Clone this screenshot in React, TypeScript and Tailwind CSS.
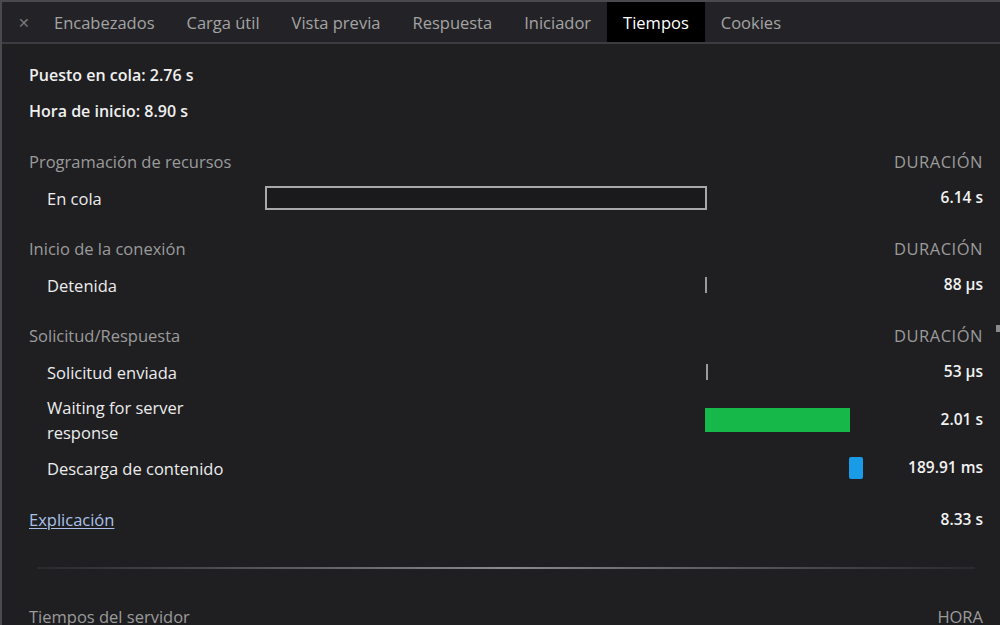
const tabs = ["Encabezados", "Carga útil", "Vista previa", "Respuesta", "Iniciador", "Tiempos", "Cookies"];

type Bar = { left: number; width: number; kind: "outline" | "tick" | "green" | "blue" };

const Row = ({ label, value, bar, tall }: { label: string; value: string; bar?: Bar; tall?: boolean }) => (
  <div className={tall ? "flex h-[60px] items-center" : "flex h-9 items-center"}>
    <div className="w-[234px] pl-[18px] pr-[8px] leading-[25px] text-[#ececec]">{label}</div>
    <div className="relative h-full w-[600px]">
      {bar && bar.kind === "outline" && (
        <div
          className="absolute top-[6px] h-[24px] border-2 border-[#a8a8a8] bg-[#1a1a1d]"
          style={{ left: bar.left, width: bar.width }}
        />
      )}
      {bar && bar.kind === "tick" && (
        <div className="absolute top-[10px] h-[16px] w-[2px] bg-[#9a9a9a]" style={{ left: bar.left }} />
      )}
      {bar && bar.kind === "green" && (
        <div
          className="absolute top-[18px] h-[24px] bg-[#17b84a]"
          style={{ left: bar.left, width: bar.width }}
        />
      )}
      {bar && bar.kind === "blue" && (
        <div
          className="absolute top-[7px] h-[22px] rounded-[2px] bg-[#1a9be8]"
          style={{ left: bar.left, width: bar.width }}
        />
      )}
    </div>
    <div className="flex-1 text-right text-[15.5px] font-semibold text-[#f2f2f2]">{value}</div>
  </div>
);

const Section = ({ title, right = "DURACIÓN" }: { title: string; right?: string }) => (
  <div className="mt-[15px] flex h-9 items-center justify-between text-[#9b9b9b]">
    <span>{title}</span>
    <span className="tracking-[0.5px]">{right}</span>
  </div>
);

export default function App() {
  return (
    <div
      className="relative h-[625px] w-[1000px] overflow-hidden border-l-2 border-[#4a4a4e] bg-[#1f1f22] text-[16.5px]"
      style={{ fontFamily: "'Open Sans', 'Noto Sans', sans-serif" }}
    >
      {/* tab strip */}
      <div className="flex h-[44px] items-stretch border-t-2 border-b-2 border-t-[#4a4a4e] border-b-[#3c3c40] bg-[#232327] text-[16.5px] text-[#a3a3a3]">
        <span className="flex w-[36px] items-center justify-end pr-[8px] text-[14px] text-[#7a7a7a]">✕</span>
        {tabs.map((t) => (
          <div
            key={t}
            className={
              t === "Tiempos"
                ? "flex items-center bg-black px-[16px] pt-[2px] text-white"
                : "flex items-center px-[16px] pt-[2px]"
            }
          >
            {t}
          </div>
        ))}
      </div>

      <div className="pl-[27px] pr-[17px] pt-[13px]">
        <div className="flex h-9 items-center text-[16px] font-semibold text-[#f0f0f0]">Puesto en cola: 2.76 s</div>
        <div className="flex h-9 items-center text-[16px] font-semibold text-[#f0f0f0]">Hora de inicio: 8.90 s</div>

        <Section title="Programación de recursos" />
        <Row label="En cola" value="6.14 s" bar={{ left: 2, width: 442, kind: "outline" }} />

        <Section title="Inicio de la conexión" />
        <Row label="Detenida" value="88 µs" bar={{ left: 442, width: 2, kind: "tick" }} />

        <Section title="Solicitud/Respuesta" />
        <Row label="Solicitud enviada" value="53 µs" bar={{ left: 443, width: 2, kind: "tick" }} />
        <Row label="Waiting for server response" value="2.01 s" tall bar={{ left: 442, width: 145, kind: "green" }} />
        <Row label="Descarga de contenido" value="189.91 ms" bar={{ left: 586, width: 14, kind: "blue" }} />

        <div className="mt-4 flex h-9 items-center justify-between">
          <a href="#" className="text-[#a9c1e6] underline underline-offset-2">Explicación</a>
          <span className="text-[15.5px] font-semibold text-[#f2f2f2]">8.33 s</span>
        </div>

        <div className="ml-[8px] mr-[8px] mt-[29px] h-[2px] bg-gradient-to-r from-[#2a2a2e] via-[#8a8a8e] to-[#2a2a2e]" />

        <div className="mt-[30px] flex h-9 items-center justify-between text-[#9b9b9b]">
          <span>Tiempos del servidor</span>
          <span>HORA</span>
        </div>
      </div>

      {/* scrollbar nub */}
      <div className="absolute right-0 top-[325px] h-[7px] w-[4px] bg-[#8a8a8a]" />
    </div>
  );
}
